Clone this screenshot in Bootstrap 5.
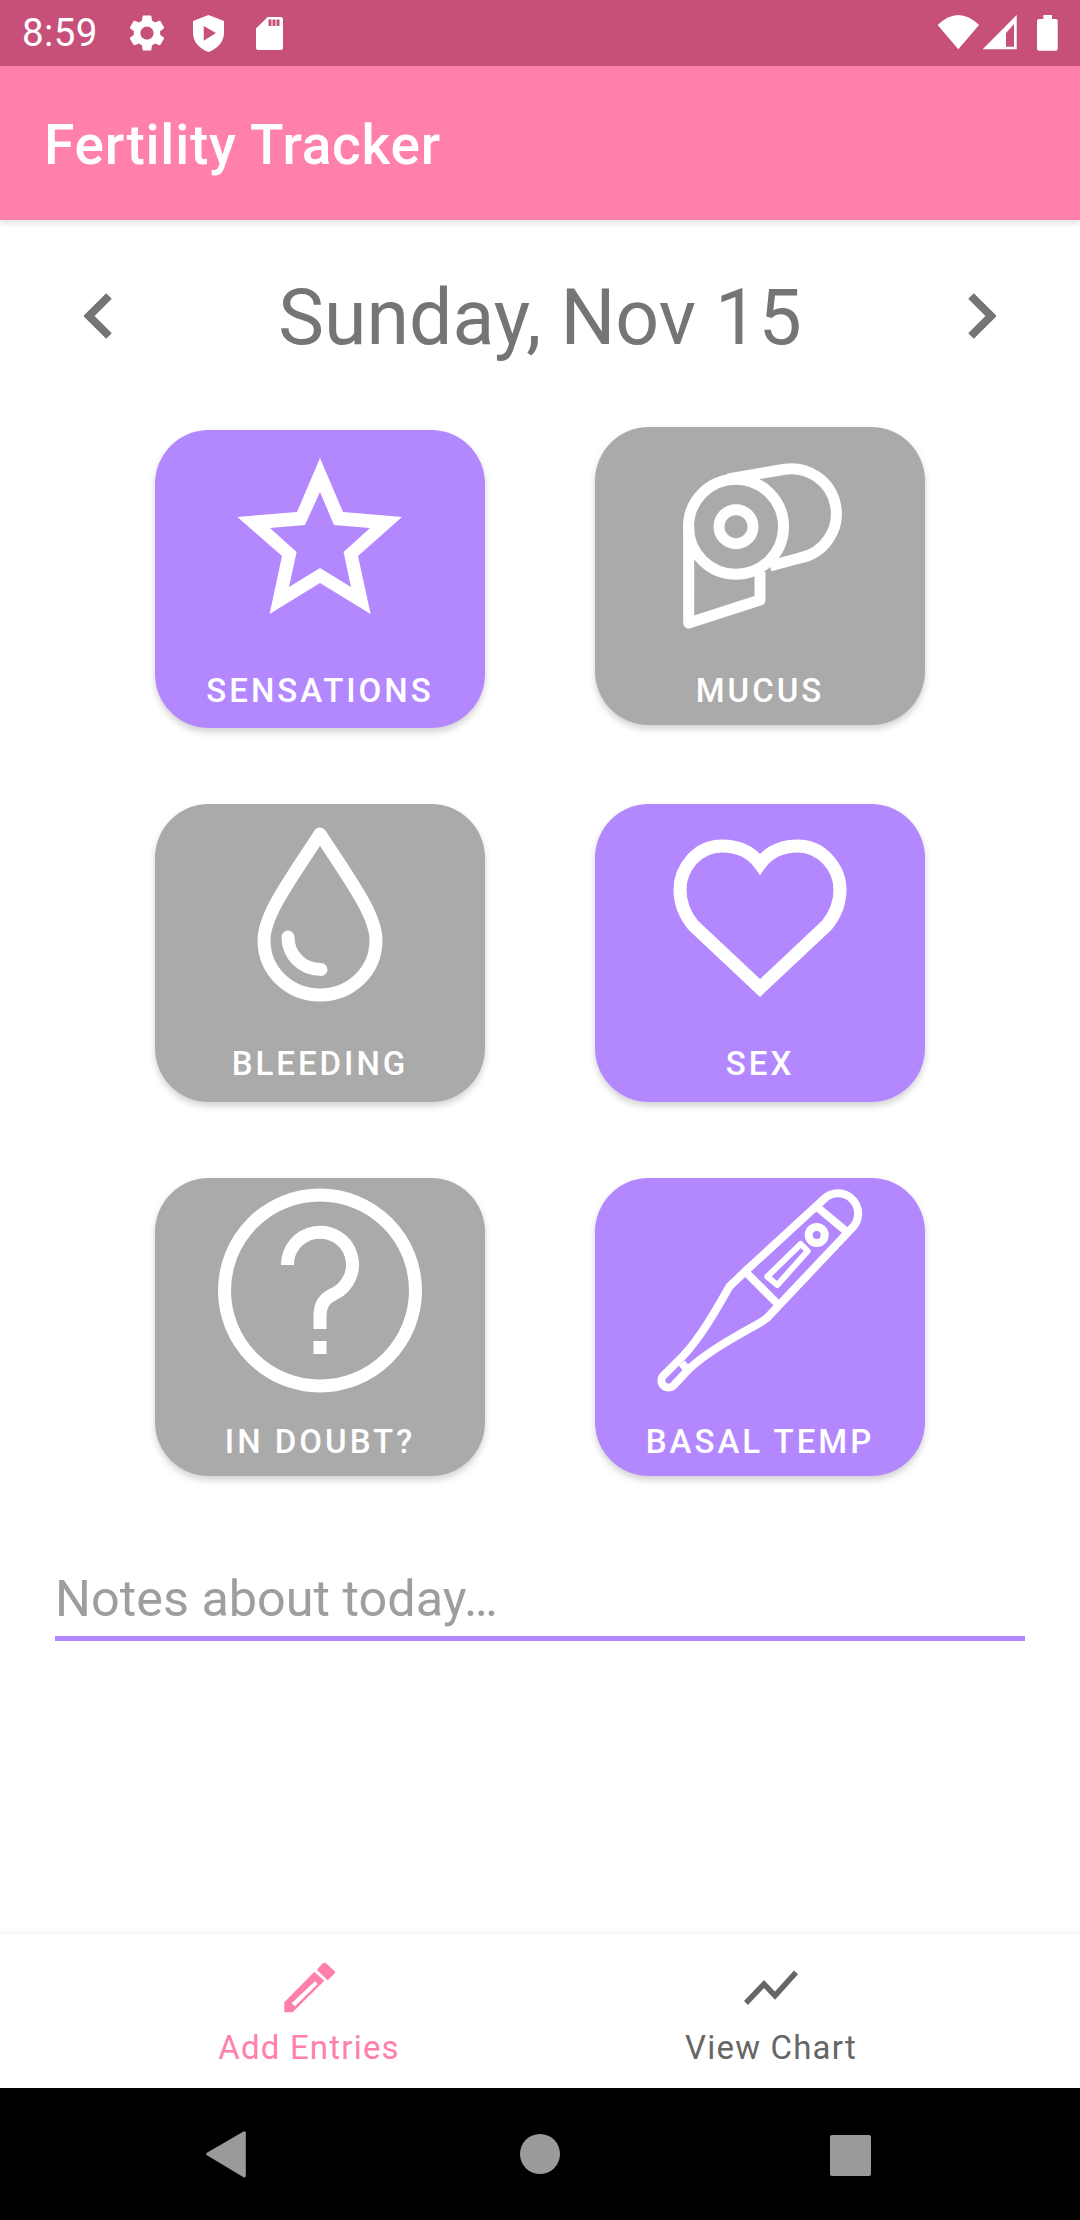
<!DOCTYPE html>
<html lang="en">
<head>
<meta charset="utf-8">
<title>Fertility Tracker</title>
<link href="https://cdn.jsdelivr.net/npm/bootstrap@5.3.0/dist/css/bootstrap.min.css" rel="stylesheet">
<style>
html,body{margin:0;height:2220px;overflow:hidden;background:#fff;font-family:Roboto,"Liberation Sans",sans-serif}
.screen{height:2220px}
.status-strip{height:66px;background:#c7507a;color:#fff;padding:0 22px 0 22px;flex:none}
.status-time{font-size:38.5px;line-height:66px;width:103px;letter-spacing:.4px}
.status-strip svg{display:block;fill:#fff}
.app-strip{height:154px;background:#ff80ab;color:#fff;padding:4px 0 0 44px;font-size:55px;letter-spacing:.8px;font-weight:500;box-shadow:0 3px 6px rgba(0,0,0,.12);position:relative;flex:none}
.date-row{height:207px;padding:42px 84px 0;color:#757575;flex:none}
.date-text{font-size:77px;line-height:112px}
.chev{margin-top:28px}
.tile-grid{display:grid;grid-template-columns:330px 330px;column-gap:110px;row-gap:76px;justify-content:center;flex:none}
.tile{width:330px;height:298px;border-radius:54px;color:#fff;box-shadow:0 4px 7px rgba(0,0,0,.18);overflow:hidden}
.tile svg{display:block;flex:none}
.tile-on{background:#b388ff}
.tile-off{background:#aaaaaa}
.tile-low{margin-top:3px}
.tile-label{font-size:33px;font-weight:500;line-height:40px;letter-spacing:3px;text-align:center}
.ink{fill:none;stroke:#fff;stroke-linejoin:round}
.solid{fill:#fff}
.notes-wrap{padding:85px 55px 0;flex:none}
.notes-field.form-control{height:80px;padding:0;border:0;border-bottom:5px solid #b388ff;border-radius:0;font-size:50.4px;line-height:70px;background:transparent;box-shadow:none}
.notes-field::placeholder{color:#9e9e9e;opacity:1}
.tab-strip{height:154px;background:#fff;box-shadow:0 -2px 4px rgba(0,0,0,.05);position:relative;flex:none}
.tab-item{width:462px;padding-top:29px;font-size:33px;line-height:36px;letter-spacing:1.2px;color:#666}
.tab-item svg{display:block;margin-bottom:15px}
.tab-active{color:#ff80ab}
.sys-strip{height:132px;background:#000;flex:none}
.sys-strip svg{display:block;width:100%;height:132px;fill:#9a9a9a}
</style>
</head>
<body>
<div class="screen d-flex flex-column">
  <div class="status-strip d-flex align-items-center">
    <div class="status-time">8:59</div>
    <svg width="44" height="44" viewBox="0 0 24 24"><path d="M19.14 12.94c.04-.3.06-.61.06-.94 0-.32-.02-.64-.07-.94l2.03-1.58c.18-.14.23-.41.12-.61l-1.92-3.32c-.12-.22-.37-.29-.59-.22l-2.39.96c-.5-.38-1.03-.7-1.62-.94l-.36-2.54c-.04-.24-.24-.41-.48-.41h-3.84c-.24 0-.43.17-.47.41l-.36 2.54c-.59.24-1.13.57-1.62.94l-2.39-.96c-.22-.08-.47 0-.59.22L2.74 8.87c-.12.21-.08.47.12.61l2.03 1.58c-.05.3-.09.63-.09.94s.02.64.07.94l-2.03 1.58c-.18.14-.23.41-.12.61l1.92 3.32c.12.22.37.29.59.22l2.39-.96c.5.38 1.03.7 1.62.94l.36 2.54c.05.24.24.41.48.41h3.84c.24 0 .44-.17.47-.41l.36-2.54c.59-.24 1.13-.56 1.62-.94l2.39.96c.22.08.47 0 .59-.22l1.92-3.32c.12-.22.07-.47-.12-.61l-2.01-1.58zM12 15.6c-1.98 0-3.6-1.62-3.6-3.6s1.62-3.6 3.6-3.6 3.6 1.62 3.6 3.6-1.62 3.6-3.6 3.6z"/></svg>
    <svg class="ms-4" width="31" height="66" viewBox="192 0 31 66"><path fill-rule="evenodd" d="M207.5 15L223 21V33C223 42 216 49 207.5 52C199 49 192 42 192 33V21ZM202.7 26V40.7L215 33Z"/></svg>
    <svg style="margin-left:32px" width="27" height="66" viewBox="255 0 27 66"><path fill-rule="evenodd" d="M266.7 17H279.5Q282 17 282 19.5V47.5Q282 50 279.5 50H257.5Q255 50 255 47.5V28.5ZM267.5 19.5V26H270.5V19.5ZM271.5 19.5V26H274.5V19.5ZM275.5 19.5V26H278.5V19.5Z"/></svg>
    <svg class="ms-auto" width="121" height="66" viewBox="937 0 121 66"><path d="M937.7 25Q958.3 5 979 25L958.3 49.3Z"/><path fill-rule="evenodd" d="M982.7 49.3H1016.7V15ZM1006 46.7H1014V24L1006 33Z"/><path d="M1043.3 15H1052V19H1055.7Q1057.7 19 1057.7 21V48.7Q1057.7 50.7 1055.7 50.7H1039Q1037 50.7 1037 48.7V21Q1037 19 1039 19H1043.3Z"/></svg>
  </div>

  <div class="app-strip d-flex align-items-center">Fertility Tracker</div>

  <div class="date-row d-flex justify-content-between align-items-start">
    <svg class="chev" width="28" height="52" viewBox="84 293 28 52"><polyline points="109,299 89,319 109,339" fill="none" stroke="#757575" stroke-width="8"/></svg>
    <div class="date-text">Sunday, Nov 15</div>
    <svg class="chev" width="28" height="52" viewBox="969 293 28 52"><polyline points="972,299 992,319 972,339" fill="none" stroke="#757575" stroke-width="8"/></svg>
  </div>

  <div class="tile-grid">
    <div class="card border-0 tile tile-on tile-low d-flex flex-column">
      <svg width="330" height="241" viewBox="155 430 330 241"><path class="solid" fill-rule="evenodd" d="M320 458L343 512L402 517L358 556L370.600 614L320 583L269.600 614L282 556L237.400 517L297 512ZM320 492L305 525L270 528L296.600 552L289 587L320 568L351 587L343.600 552L370 528L334 525Z"/></svg>
      <div class="tile-label">SENSATIONS</div>
    </div>
    <div class="card border-0 tile tile-off d-flex flex-column">
      <svg width="330" height="244" viewBox="595 427 330 244">
        <g class="ink" stroke-width="11">
          <circle cx="736" cy="526.700" r="47.500"/>
          <circle cx="736" cy="526.700" r="17"/>
          <path d="M728 479L783 469.500A45 45 0 0 1 799.700 558L770 566"/>
          <path d="M688.700 526V623L760 600V572"/>
        </g>
      </svg>
      <div class="tile-label">MUCUS</div>
    </div>
    <div class="card border-0 tile tile-off d-flex flex-column">
      <svg width="330" height="240" viewBox="155 804 330 240">
        <g class="ink" stroke-width="13">
          <path d="M320 834C290 880 264 915 264 940C264 972 290 995 320 995C350 995 376 972 376 940C376 915 350 880 320 834Z"/>
          <path d="M288 937C288 955 302 969.500 321 969.500" stroke-linecap="round"/>
        </g>
      </svg>
      <div class="tile-label">BLEEDING</div>
    </div>
    <div class="card border-0 tile tile-on d-flex flex-column">
      <svg width="330" height="240" viewBox="595 804 330 240">
        <path d="M760 864C750 850 737 846 722 846C697 846 680 868 680 890C680 905 685 915 693 925L760 988L827 925C835 915 840 905 840 890C840 868 822 846 798 846C783 846 770 850 760 864Z" fill="none" stroke="#fff" stroke-width="13" stroke-miterlimit="8"/>
      </svg>
      <div class="tile-label">SEX</div>
    </div>
    <div class="card border-0 tile tile-off d-flex flex-column">
      <svg width="330" height="244" viewBox="155 1178 330 244">
        <circle class="ink" cx="320" cy="1290.500" r="95.500" stroke-width="13"/>
        <path class="ink" stroke-width="13" d="M287.500 1265A32.500 32.500 0 1 1 334 1294Q320 1300 320 1315V1329"/>
        <rect class="solid" x="313.500" y="1341" width="13" height="13"/>
      </svg>
      <div class="tile-label">IN DOUBT?</div>
    </div>
    <div class="card border-0 tile tile-on d-flex flex-column">
      <svg width="330" height="244" viewBox="595 1178 330 244">
        <g class="ink" stroke-width="8">
          <path d="M746.700 1270L824 1199A20 20 0 0 1 852 1228L766.700 1318.300L761.700 1321.700C735 1337 710 1350 690 1368L673.500 1385.500A7 7 0 0 1 663.500 1375.500L683 1356C700 1338 715 1312 729.300 1286.700Z"/>
          <path d="M746.700 1273L776.700 1303M816.700 1206.700L848.300 1233M681.700 1363L690 1373"/>
          <circle cx="816.700" cy="1235" r="8"/>
          <path d="M767.300 1276.700L777.300 1285L807.700 1251L800.700 1244Z" stroke-width="6"/>
        </g>
      </svg>
      <div class="tile-label">BASAL TEMP</div>
    </div>
  </div>

  <div class="notes-wrap">
    <input class="form-control notes-field" type="text" placeholder="Notes about today…">
  </div>

  <div class="flex-grow-1"></div>

  <nav class="tab-strip d-flex justify-content-center">
    <div class="tab-item tab-active d-flex flex-column align-items-center">
      <svg width="52" height="52" viewBox="282 1964 52 52" fill="#ff80ab"><path fill-rule="evenodd" d="M313.300 1972.700L323.300 1981.700L291.700 2013.300H283.300V2003.300ZM314 1982.300L290.700 2004.300L294 2007.300L316.700 1985Z"/><path d="M323.300 1964L333.300 1973.300L326.700 1980L317.300 1970.700Z" stroke="#ff80ab" stroke-width="2" stroke-linejoin="round"/></svg>
      <div>Add Entries</div>
    </div>
    <div class="tab-item d-flex flex-column align-items-center">
      <svg width="56" height="52" viewBox="743 1964 56 52" fill="none"><polyline points="746,2004 764,1985 775,1996.700 796,1973.300" stroke="#666" stroke-width="5.500"/></svg>
      <div>View Chart</div>
    </div>
  </nav>

  <div class="sys-strip">
    <svg viewBox="0 2088 1080 132"><path d="M207.700 2154L244.300 2132.700V2176Z" stroke="#9a9a9a" stroke-width="3" stroke-linejoin="round"/><circle cx="540" cy="2154" r="20"/><rect x="830" y="2135" width="41" height="41" rx="2"/></svg>
  </div>
</div>
<script src="https://cdn.jsdelivr.net/npm/bootstrap@5.3.0/dist/js/bootstrap.bundle.min.js"></script>
</body>
</html>
